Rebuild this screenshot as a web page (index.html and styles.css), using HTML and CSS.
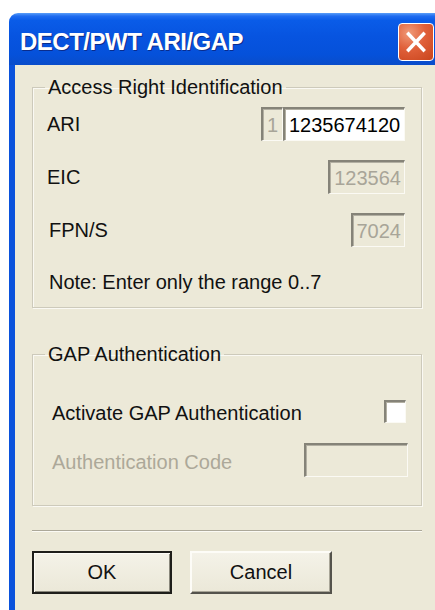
FILE: index.html
```html
<!DOCTYPE html>
<html lang="en">
<head>
<meta charset="utf-8">
<title>DECT/PWT ARI/GAP</title>
<link rel="stylesheet" href="styles.css">
</head>
<body>
<div class="window">
  <div class="titlebar">
    <span class="title">DECT/PWT ARI/GAP</span>
    <button class="close" type="button" aria-label="Close">
      <svg width="36" height="38" viewBox="0 0 36 38">
        <path d="M10 10.5 L26 27.5 M26 10.5 L10 27.5" stroke="#fff" stroke-width="3.6" stroke-linecap="square"/>
      </svg>
    </button>
  </div>
  <div class="client">
    <fieldset class="group group-ari">
      <legend>Access Right Identification</legend>
      <div class="row">
        <span class="label">ARI</span>
        <div class="ari-pair">
          <span class="field disabled ari-prefix">1</span>
          <span class="field ari-value">1235674120</span>
        </div>
      </div>
      <div class="row">
        <span class="label">EIC</span>
        <span class="field disabled eic">123564</span>
      </div>
      <div class="row">
        <span class="label fpn">FPN/S</span>
        <span class="field disabled fpns">7024</span>
      </div>
      <p class="note">Note: Enter only the range 0..7</p>
    </fieldset>

    <fieldset class="group group-gap">
      <legend>GAP Authentication</legend>
      <div class="row">
        <span class="label">Activate GAP Authentication</span>
        <span class="checkbox"></span>
      </div>
      <div class="row">
        <span class="label muted low">Authentication Code</span>
        <span class="field disabled auth-code"></span>
      </div>
    </fieldset>

    <div class="separator"></div>

    <div class="buttons">
      <button class="btn btn-default" type="button">OK</button>
      <button class="btn" type="button">Cancel</button>
    </div>
  </div>
</div>
</body>
</html>
```
FILE: styles.css
```css
html, body {
  margin: 0;
  height: 100%;
  background: #fff;
  overflow: hidden;
}

body {
  font-family: "Liberation Sans", Arial, sans-serif;
  font-size: 20px;
  color: #111;
}

.window {
  margin: 13px 0 0 9px;
  display: flex;
  flex-direction: column;
  height: 620px;
}

/* Luna style caption */
.titlebar {
  height: 52px;
  border-radius: 9px 0 0 0;
  background: linear-gradient(#5a9ef8 0, #1f6cf0 6%, #0a5ce8 14%, #0754e0 45%, #0551da 80%, #0a4cca 100%);
  display: flex;
  align-items: center;
  padding-left: 11px;
}

.title {
  flex: 1;
  color: #fff;
  font-weight: bold;
  font-size: 24px;
  letter-spacing: -0.5px;
  margin-top: 6px;
  text-shadow: 1px 1px 0 #0a2c8c;
}

.close {
  width: 36px;
  height: 38px;
  padding: 0;
  margin: 6px 1px 0 0;
  border: 1px solid #fff;
  border-radius: 4px;
  background: radial-gradient(circle at 30% 25%, #f09a78 0, #e0603a 45%, #c9441c 100%);
  display: flex;
  align-items: center;
  justify-content: center;
  overflow: hidden;
}

.close svg {
  display: block;
}

.client {
  flex: 1;
  background: #ece9d8;
  border-left: 6px solid #0a52dc;
  padding: 11px 13px 0 17px;
}

/* group boxes */
.group {
  margin: 0;
  min-width: 0;
  border: 1px solid #cdcabb;
  box-shadow: inset 1px 1px 0 #faf9f3, 1px 1px 0 #faf9f3;
  display: flex;
  flex-direction: column;
}

.group legend {
  padding: 0 3px;
  line-height: 22px;
}

.group-ari {
  padding: 9px 16px 14px 14px;
  gap: 19px;
}

.group-ari legend {
  margin-left: -2px;
}

.group-gap {
  margin-top: 35px;
  padding: 31px 13px 29px 19px;
  gap: 12px;
}

.group-gap legend {
  margin-left: -7px;
}

.row {
  height: 34px;
  display: flex;
  align-items: center;
  justify-content: space-between;
}

.label {
  line-height: 22px;
}

.label.fpn {
  padding-left: 2px;
}

.label.low {
  margin-top: 5px;
}

.muted {
  color: #aca899;
}

.note {
  margin: 5px 0 0 2px;
  line-height: 22px;
}

/* sunken edit fields */
.field {
  box-sizing: border-box;
  height: 34px;
  display: flex;
  align-items: center;
  padding: 0 3px 0 4px;
  background: #fff;
  border-style: solid;
  border-width: 2px 1px 1px 2px;
  border-color: #858378 #fbfaf4 #fbfaf4 #858378;
  box-shadow: inset 1px 1px 0 #b2afa2;
  color: #000;
  line-height: 22px;
}

.field.disabled {
  background: #ece9d8;
  color: #a8a598;
}

.ari-pair {
  display: flex;
}

.ari-prefix {
  width: 22px;
  padding: 0 0 0 4px;
}

.ari-value {
  width: 122px;
  padding-left: 4px;
}

.eic {
  width: 77px;
  justify-content: flex-end;
}

.fpns {
  width: 54px;
  justify-content: flex-end;
}

.auth-code {
  width: 104px;
  margin-top: 2px;
}

.checkbox {
  box-sizing: border-box;
  width: 22px;
  height: 23px;
  margin: 0 2px 4px 0;
  background: #fff;
  border-style: solid;
  border-width: 2px 1px 1px 2px;
  border-color: #858378 #fbfaf4 #fbfaf4 #858378;
  box-shadow: inset 1px 1px 0 #b2afa2;
}

.separator {
  margin-top: 24px;
  width: 390px;
  height: 1px;
  background: #aca899;
  border-bottom: 1px solid #fbfaf4;
}

.buttons {
  margin-top: 19px;
  display: flex;
  gap: 18px;
}

.btn {
  box-sizing: border-box;
  width: 142px;
  height: 43px;
  font-family: inherit;
  font-size: 20px;
  color: #111;
  background: linear-gradient(#f4f2e8, #ebe8d8);
  border-style: solid;
  border-width: 2px;
  border-color: #fdfcf7 #54534c #54534c #fdfcf7;
  box-shadow: inset -1px -1px 0 #a9a698;
  padding: 0;
}

.btn-default {
  width: 140px;
  border: 2px solid #1e1e1a;
  box-shadow: inset 1px 1px 0 #fdfcf7, inset -1px -1px 0 #8a887c;
}
```
